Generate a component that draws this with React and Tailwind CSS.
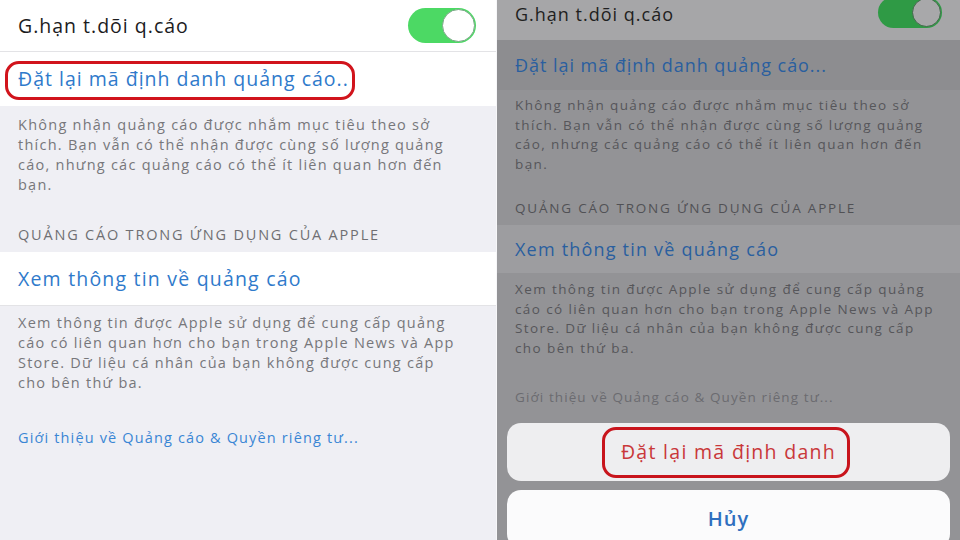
import React from "react";

const FONT = { fontFamily: '"Open Sans", "Noto Sans", sans-serif' };

// iOS style switch, always on
function Toggle({ dim }) {
  return (
    <div
      className={`relative rounded-full ${dim ? "w-[64px] h-[31px] bg-[#2f9a45]" : "w-[68px] h-[35px] bg-[#4cd964]"}`}
    >
      <div
        className={`absolute top-[1px] right-[1px] rounded-full border ${dim ? "w-[29px] h-[29px] bg-[#a8a8aa] border-[#3d6a47]" : "w-[33px] h-[33px] bg-white border-[#7aa886]"}`}
      />
    </div>
  );
}

function LeftPanel() {
  return (
    <div className="w-[497px] h-full bg-[#efeff4] border-r border-[#f7f7f9] flex flex-col">
      <div className="shrink-0 h-[52px] bg-white flex items-center justify-between pl-[18px] pr-[20px] border-b border-[#e3e3e6]">
        <span className="text-[19.5px] tracking-[1px] text-[#1c1c1e]">G.hạn t.dõi q.cáo</span>
        <Toggle />
      </div>
      <div className="shrink-0 relative h-[54px] bg-white flex items-center pl-[18px]">
        <span className="text-[19.5px] tracking-[1px] text-[#2f7acb]">Đặt lại mã định danh quảng cáo..</span>
        {/* red annotation */}
        <div className="absolute left-[5px] top-[9px] w-[350px] h-[39px] border-[3px] border-[#d1141c] rounded-[14px]" />
      </div>

      <div className="shrink-0 pt-[9px] pl-[18px] text-[14.5px] tracking-[1.25px] leading-[20px] text-[#77777b]">
        <div>Không nhận quảng cáo được nhắm mục tiêu theo sở</div>
        <div>thích. Bạn vẫn có thể nhận được cùng số lượng quảng</div>
        <div>cáo, nhưng các quảng cáo có thể ít liên quan hơn đến</div>
        <div>bạn.</div>
      </div>
      <div className="shrink-0 mt-[30px] pl-[18px] text-[14.5px] tracking-[1.8px] leading-[20px] text-[#6f6f73]">
        QUẢNG CÁO TRONG ỨNG DỤNG CỦA APPLE
      </div>
      <div className="shrink-0 mt-[7px] h-[54px] bg-white flex items-center pl-[18px] border-b border-[#e3e3e6]">
        <span className="text-[19.5px] tracking-[1.2px] text-[#2f7acb]">Xem thông tin về quảng cáo</span>
      </div>
      <div className="shrink-0 pt-[7px] pl-[18px] text-[14.5px] tracking-[1.25px] leading-[20px] text-[#77777b]">
        <div>Xem thông tin được Apple sử dụng để cung cấp quảng</div>
        <div>cáo có liên quan hơn cho bạn trong Apple News và App</div>
        <div>Store. Dữ liệu cá nhân của bạn không được cung cấp</div>
        <div>cho bên thứ ba.</div>
      </div>
      <div className="shrink-0 mt-[35px] pl-[18px] text-[14.5px] tracking-[1.15px] leading-[20px] text-[#3a86d4]">
        Giới thiệu về Quảng cáo &amp; Quyền riêng tư...
      </div>
    </div>
  );
}

function RightPanel() {
  return (
    <div className="flex-1 h-full bg-[#939396] flex flex-col overflow-hidden">
      <div className="shrink-0 h-[40px] bg-[#a6a6a8] flex items-center justify-between pl-[18px] pr-[18px] pb-[12px]">
        <span className="text-[18px] tracking-[1px] text-[#1f1f21]">G.hạn t.dõi q.cáo</span>
        <div className="-mt-[3px]">
          <Toggle dim />
        </div>
      </div>
      <div className="shrink-0 h-[50px] bg-[#8d8d90] flex items-center pl-[18px]">
        <span className="text-[18px] tracking-[0.95px] text-[#2a5f9f]">Đặt lại mã định danh quảng cáo...</span>
      </div>

      <div className="shrink-0 pt-[6px] pl-[18px] text-[13.5px] tracking-[1.4px] leading-[19.5px] text-[#56565a]">
        <div>Không nhận quảng cáo được nhắm mục tiêu theo sở</div>
        <div>thích. Bạn vẫn có thể nhận được cùng số lượng quảng</div>
        <div>cáo, nhưng các quảng cáo có thể ít liên quan hơn đến</div>
        <div>bạn.</div>
      </div>
      <div className="shrink-0 mt-[24px] pl-[18px] text-[13.5px] tracking-[1.8px] leading-[20px] text-[#515155]">
        QUẢNG CÁO TRONG ỨNG DỤNG CỦA APPLE
      </div>
      <div className="shrink-0 mt-[7px] h-[48px] bg-[#9d9da0] flex items-center pl-[18px]">
        <span className="text-[18px] tracking-[1.2px] text-[#2a5f9f]">Xem thông tin về quảng cáo</span>
      </div>
      <div className="shrink-0 pt-[7px] pl-[18px] text-[13.5px] tracking-[1.4px] leading-[19.5px] text-[#56565a]">
        <div>Xem thông tin được Apple sử dụng để cung cấp quảng</div>
        <div>cáo có liên quan hơn cho bạn trong Apple News và App</div>
        <div>Store. Dữ liệu cá nhân của bạn không được cung cấp</div>
        <div>cho bên thứ ba.</div>
      </div>
      <div className="shrink-0 mt-[29px] pl-[18px] text-[13.5px] tracking-[1.1px] leading-[20px] text-[#6b6b70]">
        Giới thiệu về Quảng cáo &amp; Quyền riêng tư...
      </div>

      {/* action sheet */}
      <div className="shrink-0 mt-[16px] px-[10px] flex flex-col gap-[9px]">
        <div className="relative h-[58px] rounded-[14px] bg-[#eeeef0] flex items-center justify-center">
          <span className="text-[19.5px] tracking-[1.3px] text-[#c9383a]">Đặt lại mã định danh</span>
          <div className="absolute left-[95px] top-[4px] w-[248px] h-[51px] border-[3px] border-[#c8141c] rounded-[14px]" />
        </div>
        <div className="h-[58px] rounded-[14px] bg-[#fbfbfc] flex items-center justify-center">
          <span className="text-[20px] tracking-[1px] font-semibold text-[#2f6fbf]">Hủy</span>
        </div>
      </div>
    </div>
  );
}

export default function App() {
  return (
    <div className="w-[960px] h-[540px] flex overflow-hidden bg-white" style={FONT}>
      <LeftPanel />
      <RightPanel />
    </div>
  );
}
